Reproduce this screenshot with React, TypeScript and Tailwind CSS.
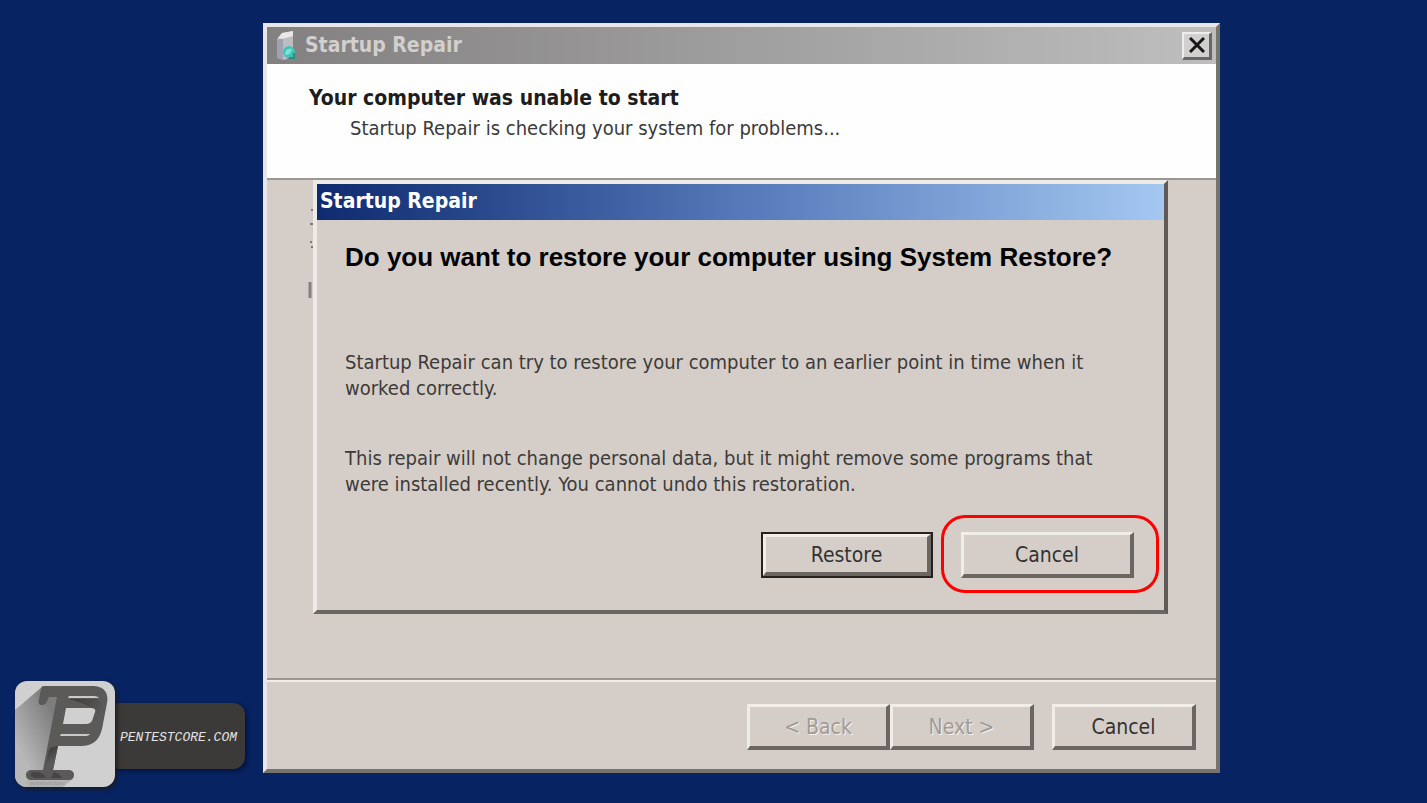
import clsx from "clsx";
import type { ButtonHTMLAttributes } from "react";

const uiFont = "font-['DejaVu_Sans_Condensed','DejaVu_Sans',sans-serif]";

function ClassicButton({ className, ...props }: ButtonHTMLAttributes<HTMLButtonElement>) {
  return (
    <button
      type="button"
      className={clsx(
        "h-[46px] border-t-[3px] border-l-[3px] border-r-4 border-b-4 border-t-[#f0ece6] border-l-[#f0ece6] border-r-[#6b6661] border-b-[#6b6661] bg-[#d5cec8] text-[21px] leading-6 text-[#333] disabled:text-[#a09b96] disabled:[text-shadow:1px_1px_0_#f4f1ed]",
        className
      )}
      {...props}
    />
  );
}

function RepairIcon() {
  return (
    <svg viewBox="0 0 24 30" className="h-[30px] w-6" aria-hidden="true">
      <path d="M3 8 8 2l11-2v24l-8 5-8-2z" fill="#bdbdc0" />
      <path d="M3 9 9 7v22l-6-2z" fill="#a0a1b2" />
      <path d="M4 7 8 2l11-2v5L8 8z" fill="#e8e8e8" />
      <circle cx="15" cy="21" r="6" fill="#41c4b5" />
      <path d="M11 22c1-4 4-5 7-4-1 4-3 6-6 6z" fill="#79e5d7" />
      <path d="M15 27h5v-5" fill="none" stroke="#2d8c88" strokeWidth="2" />
    </svg>
  );
}

function Logo() {
  return (
    <svg viewBox="0 0 100 106" className="h-[106px] w-[100px]" aria-hidden="true">
      <defs>
        <clipPath id="tile">
          <rect width="100" height="106" rx="12" />
        </clipPath>
        <linearGradient id="cast" gradientUnits="userSpaceOnUse" x1="0" y1="60" x2="42" y2="40">
          <stop offset="0" stopColor="#b8b8b8" />
          <stop offset="1" stopColor="#7d7d7d" />
        </linearGradient>
        <linearGradient id="bowl" gradientUnits="userSpaceOnUse" x1="54" y1="18" x2="84" y2="36">
          <stop offset="0" stopColor="#3a3938" />
          <stop offset="1" stopColor="#5b5a59" />
        </linearGradient>
        <linearGradient id="leg" gradientUnits="userSpaceOnUse" x1="34" y1="66" x2="42" y2="78">
          <stop offset="0" stopColor="#3b3a39" />
          <stop offset="1" stopColor="#5b5a59" />
        </linearGradient>
      </defs>
      <g clipPath="url(#tile)">
        <rect width="100" height="106" fill="#d0d0d0" />
        <path d="M0 29 27 6 50 20 36 98 20 106H0z" fill="url(#cast)" />
        <path d="M12 98h46l-10 8H12z" fill="#b2b2b2" />
        <path
          fillRule="evenodd"
          d="M29 5H78C89 5 94 12 92 22L87 48C84 60 77 65 66 65H43L38 89H53C57 89 59 91 59 94C59 97 57 99 53 99H17C13 99 11 97 11 94C11 91 13 89 17 89H28L42 16H34L32 20C31 23 29 24 27 24C24 24 23 22 24 18L26 8C26 6 27 5 29 5ZM51 27L48 43H70C75 43 77 41 78 37L80 31C81 28 79 27 76 27Z"
          fill="#5b5a59"
        />
        <path d="M54 18H78C86 18 89 22 88 29L85 42C84 46 81 50 77 52C79 47 80 42 81 37L82 31C82 28 80 27 76 27C70 23 62 20 54 18Z" fill="url(#bowl)" />
        <path d="M34 69C36 66 39 65 43 65L38 89H29z" fill="url(#leg)" />
        <path d="M17 91C25 91 29 92 31 97H19L15 94z" fill="#474645" />
        <path d="M39 91C43 92 45 94 47 97H36z" fill="#474645" />
        <path d="M54 15H79C82 15 83 16 84 17H53zM46 53H75C74 54 73 55 71 55H45z" fill="#c9c9c9" />
      </g>
      <text x="15" y="104" fontSize="5" fill="#8f8f8f" fontFamily="Liberation Serif, serif">PENTESTCORE</text>
    </svg>
  );
}

function RestoreDialog() {
  return (
    <section
      role="dialog"
      aria-labelledby="restore-title"
      className="border-t-4 border-r-4 border-b-4 border-l-4 border-t-[#eeeae5] border-r-[#5e5a57] border-b-[#6a6662] border-l-[#eeeae5] bg-[#d5cec8]"
    >
      <h2
        id="restore-title"
        className="flex h-9 items-center bg-linear-to-r from-[#102a70] via-[#5579b9] to-[#a4c8f0] px-[3px] text-[21px] font-bold text-white"
      >
        Startup Repair
      </h2>
      <div className="pt-[21px] pr-[30px] pb-8 pl-7 text-xl leading-[26px] text-[#3d3b3a]">
        <h3 className="font-['Liberation_Sans',Arial,sans-serif] text-[26px] leading-8 font-bold text-black">
          Do you want to restore your computer using System Restore?
        </h3>
        <p className="mt-[76px]">
          Startup Repair can try to restore your computer to an earlier point in time when it
          <br />
          worked correctly.
        </p>
        <p className="mt-11">
          This repair will not change personal data, but it might remove some programs that
          <br />
          were installed recently. You cannot undo this restoration.
        </p>
        <div className="mt-[35px] flex justify-end gap-7">
          <div className="border-2 border-[#24211f]">
            <ClassicButton className="h-[42px]! w-[168px]">Restore</ClassicButton>
          </div>
          <div className="relative">
            <ClassicButton className="w-[173px]">Cancel</ClassicButton>
            <span className="pointer-events-none absolute -top-[17px] -right-[25px] -bottom-[15px] -left-5 rounded-3xl border-[3px] border-[#fd0000]" />
          </div>
        </div>
      </div>
    </section>
  );
}

export default function App() {
  return (
    <div className={clsx("relative min-h-screen bg-[#072362] pt-[23px] pr-[207px] pb-[29px] pl-[263px]", uiFont)}>
      <main className="border-t-4 border-r-4 border-b-4 border-l-4 border-t-[#e9e7e5] border-r-[#77736f] border-b-[#77736f] border-l-[#e9e7e5] bg-[#d5cec8]">
        <header className="flex h-[37px] items-center justify-between bg-linear-to-r from-[#828080] to-[#bebebe] pr-1 pl-[7px]">
          <div className="flex items-center gap-[7px]">
            <RepairIcon />
            <h1 className="text-[21px] font-bold text-[#d2cfcc]">Startup Repair</h1>
          </div>
          <button
            type="button"
            aria-label="Close"
            className="flex h-7 w-[30px] items-center justify-center border-t-2 border-r-[3px] border-b-[3px] border-l-2 border-t-[#eee] border-r-[#686868] border-b-[#686868] border-l-[#eee] bg-[#d2d0ce]"
          >
            <svg viewBox="0 0 16 16" className="size-4" aria-hidden="true">
              <path d="M1 1l14 14M15 1 1 15" stroke="#161616" strokeWidth="3" />
            </svg>
          </button>
        </header>

        <div className="h-[116px] border-b-2 border-[#9a9693] bg-[#fefefe] px-[42px] pt-[19px]">
          <h2 className="text-[21px] leading-[30px] font-bold text-[#1d1d1f]">Your computer was unable to start</h2>
          <p className="px-[41px] text-xl leading-[30px] text-[#3a3a3b]">
            Startup Repair is checking your system for problems...
          </p>
        </div>

        <div className="relative pr-12 pb-16 pl-[46px]">
          {/* edge of the wizard page that shows beside the dialog */}
          <svg viewBox="0 0 6 92" className="absolute top-7 left-10 h-[92px] w-[6px]" aria-hidden="true">
            <path d="M4 2h2M3 16h3M3 34h2M4 39h2" stroke="#7d7975" strokeWidth="2" />
            <path d="M3 74v16" stroke="#85817c" strokeWidth="3" />
          </svg>
          <RestoreDialog />
        </div>

        <footer className="border-t-2 border-[#9a9693]">
          <div className="flex justify-end border-t-2 border-[#f0ece7] pt-[22px] pr-5 pb-[19px]">
            <ClassicButton className="w-[143px]" disabled>
              &lt; Back
            </ClassicButton>
            <ClassicButton className="w-36" disabled>
              Next &gt;
            </ClassicButton>
            <ClassicButton className="ml-[18px] w-36">Cancel</ClassicButton>
          </div>
        </footer>
      </main>

      <a href="#" className="absolute bottom-4 left-[15px] flex items-center">
        <span className="z-10 rounded-xl shadow-[2px_2px_4px_#1c1b1b]">
          <Logo />
        </span>
        <span className="mt-1 -ml-2 flex h-[66px] items-center rounded-xl bg-[#3c3a38] pt-1 pr-2 pl-[13px] font-['Liberation_Mono',monospace] text-[13px] text-[#e4e4e4] italic shadow-[2px_2px_4px_#04133a]">
          PENTESTCORE.COM
        </span>
      </a>
    </div>
  );
}
